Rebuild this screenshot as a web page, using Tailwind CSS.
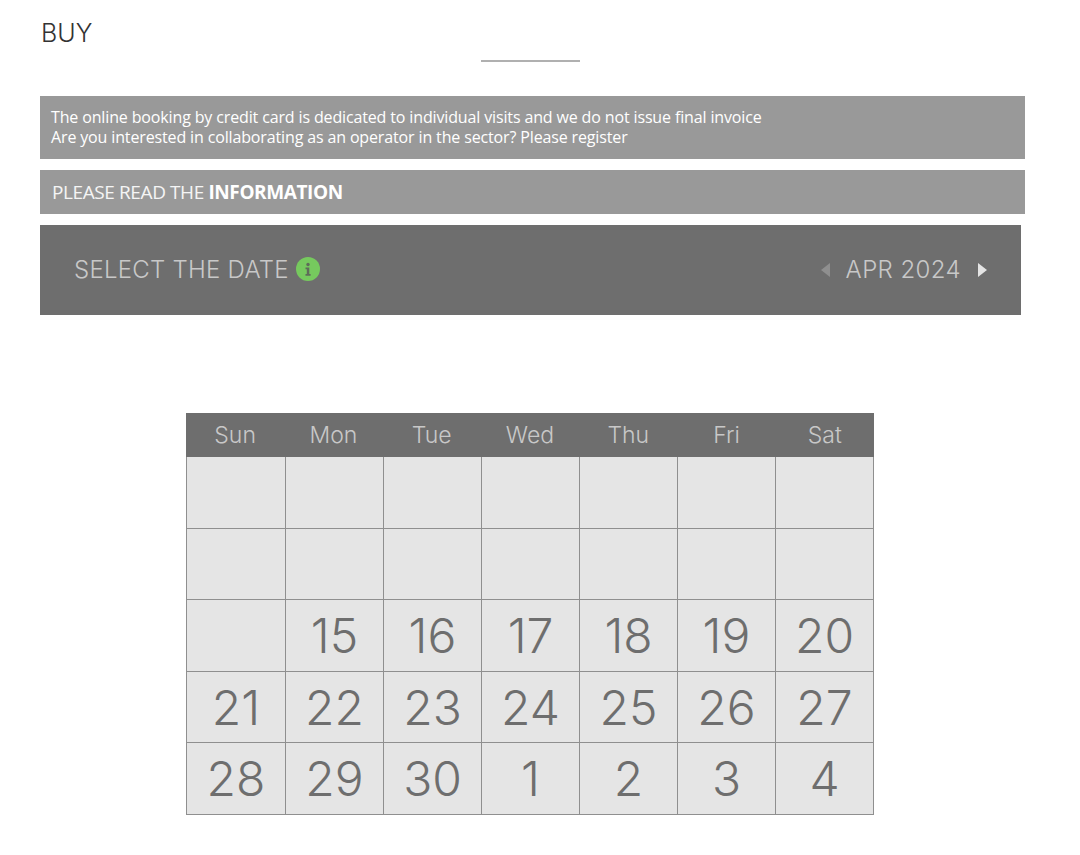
<!DOCTYPE html>
<html lang="en">
<head>
  <meta charset="UTF-8">
  <meta name="viewport" content="width=device-width, initial-scale=1.0">
  <title>Buy</title>
  <script src="https://cdn.jsdelivr.net/npm/@tailwindcss/browser@4"></script>
</head>
<body class="bg-white h-[855px] overflow-hidden font-['Inter',sans-serif]">
  <div class="pl-10 pr-[55px]">
    <!-- Title -->
    <h1 class="pt-[19px] pl-px h-[60px] text-[25px] leading-[28px] font-light text-[#333]">BUY</h1>
    <div class="ml-[441px] w-[99px] h-0.5 bg-[#b0b0b0]"></div>

    <!-- Notices -->
    <div class="mt-[34px] h-[63px] bg-[#999] px-[11px] pt-[11px] text-[16px] leading-[20px] text-white font-['Open_Sans',sans-serif] tracking-[-0.14px]">
      The online booking by credit card is dedicated to individual visits and we do not issue final invoice<br>
      Are you interested in collaborating as an operator in the sector? Please register
    </div>
    <div class="mt-[11px] h-11 bg-[#999] px-3 flex items-center text-[19px] text-white font-['Open_Sans',sans-serif] tracking-[-0.4px]">
      <span><span class="text-white/90">PLEASE READ THE</span> <b class="font-bold">INFORMATION</b></span>
    </div>

    <!-- Date bar -->
    <div class="mt-[11px] w-[981px] h-[90px] bg-[#6e6e6e] pl-[34px] pr-[34px] flex items-center justify-between text-[#c8c8c8] text-[24px] font-light">
      <div class="flex items-center gap-[7px]">
        <span class="tracking-[0.25px]">SELECT THE DATE</span>
        <svg class="w-6 h-6 -mt-0.5" viewBox="0 0 24 24">
          <circle cx="12" cy="12" r="12" fill="#76c95e"/>
          <circle cx="12" cy="7.5" r="1.7" fill="#5f6b5a"/>
          <path d="M9.5 10.5h3.8v6.5h1.3v1.8H9.5V17h1.3v-4.7H9.5z" fill="#5f6b5a"/>
        </svg>
      </div>
      <div class="flex items-center">
        <svg class="w-2.5 h-4 -mt-px" viewBox="0 0 10 16"><path d="M10 1v14L1 8z" fill="#8f8f8f"/></svg>
        <span class="mx-4 tracking-[0.4px]">APR 2024</span>
        <svg class="w-2.5 h-4 -mt-px" viewBox="0 0 10 16"><path d="M1 1v14l9-7z" fill="#e4e4e4"/></svg>
      </div>
    </div>

    <!-- Calendar -->
    <div class="mt-[98px] ml-[146px] w-[688px]">
      <div class="grid grid-cols-7 h-11 bg-[#6e6e6e] text-[#c8c8c8] text-[23px] font-light text-center items-center">
        <div>Sun</div><div>Mon</div><div>Tue</div><div>Wed</div><div>Thu</div><div>Fri</div><div>Sat</div>
      </div>
      <div class="grid grid-cols-[99px_repeat(6,98px)] auto-rows-[71.6px] border-l border-[#8f8f8f] text-[48px] font-light text-[#6e6e6e] text-center">
        <div class="bg-[#e5e5e5] border-r border-b border-[#8f8f8f]"></div>
        <div class="bg-[#e5e5e5] border-r border-b border-[#8f8f8f]"></div>
        <div class="bg-[#e5e5e5] border-r border-b border-[#8f8f8f]"></div>
        <div class="bg-[#e5e5e5] border-r border-b border-[#8f8f8f]"></div>
        <div class="bg-[#e5e5e5] border-r border-b border-[#8f8f8f]"></div>
        <div class="bg-[#e5e5e5] border-r border-b border-[#8f8f8f]"></div>
        <div class="bg-[#e5e5e5] border-r border-b border-[#8f8f8f]"></div>

        <div class="bg-[#e5e5e5] border-r border-b border-[#8f8f8f]"></div>
        <div class="bg-[#e5e5e5] border-r border-b border-[#8f8f8f]"></div>
        <div class="bg-[#e5e5e5] border-r border-b border-[#8f8f8f]"></div>
        <div class="bg-[#e5e5e5] border-r border-b border-[#8f8f8f]"></div>
        <div class="bg-[#e5e5e5] border-r border-b border-[#8f8f8f]"></div>
        <div class="bg-[#e5e5e5] border-r border-b border-[#8f8f8f]"></div>
        <div class="bg-[#e5e5e5] border-r border-b border-[#8f8f8f]"></div>

        <div class="bg-[#e5e5e5] border-r border-b border-[#8f8f8f]"></div>
        <div class="bg-[#e5e5e5] border-r border-b border-[#8f8f8f] pt-px flex items-center justify-center">15</div>
        <div class="bg-[#e5e5e5] border-r border-b border-[#8f8f8f] pt-px flex items-center justify-center">16</div>
        <div class="bg-[#e5e5e5] border-r border-b border-[#8f8f8f] pt-px flex items-center justify-center">17</div>
        <div class="bg-[#e5e5e5] border-r border-b border-[#8f8f8f] pt-px flex items-center justify-center">18</div>
        <div class="bg-[#e5e5e5] border-r border-b border-[#8f8f8f] pt-px flex items-center justify-center">19</div>
        <div class="bg-[#e5e5e5] border-r border-b border-[#8f8f8f] pt-px flex items-center justify-center">20</div>

        <div class="bg-[#e5e5e5] border-r border-b border-[#8f8f8f] pt-px flex items-center justify-center">21</div>
        <div class="bg-[#e5e5e5] border-r border-b border-[#8f8f8f] pt-px flex items-center justify-center">22</div>
        <div class="bg-[#e5e5e5] border-r border-b border-[#8f8f8f] pt-px flex items-center justify-center">23</div>
        <div class="bg-[#e5e5e5] border-r border-b border-[#8f8f8f] pt-px flex items-center justify-center">24</div>
        <div class="bg-[#e5e5e5] border-r border-b border-[#8f8f8f] pt-px flex items-center justify-center">25</div>
        <div class="bg-[#e5e5e5] border-r border-b border-[#8f8f8f] pt-px flex items-center justify-center">26</div>
        <div class="bg-[#e5e5e5] border-r border-b border-[#8f8f8f] pt-px flex items-center justify-center">27</div>

        <div class="bg-[#e5e5e5] border-r border-b border-[#8f8f8f] pt-px flex items-center justify-center">28</div>
        <div class="bg-[#e5e5e5] border-r border-b border-[#8f8f8f] pt-px flex items-center justify-center">29</div>
        <div class="bg-[#e5e5e5] border-r border-b border-[#8f8f8f] pt-px flex items-center justify-center">30</div>
        <div class="bg-[#e5e5e5] border-r border-b border-[#8f8f8f] pt-px flex items-center justify-center">1</div>
        <div class="bg-[#e5e5e5] border-r border-b border-[#8f8f8f] pt-px flex items-center justify-center">2</div>
        <div class="bg-[#e5e5e5] border-r border-b border-[#8f8f8f] pt-px flex items-center justify-center">3</div>
        <div class="bg-[#e5e5e5] border-r border-b border-[#8f8f8f] pt-px flex items-center justify-center">4</div>
      </div>
    </div>
  </div>
</body>
</html>
